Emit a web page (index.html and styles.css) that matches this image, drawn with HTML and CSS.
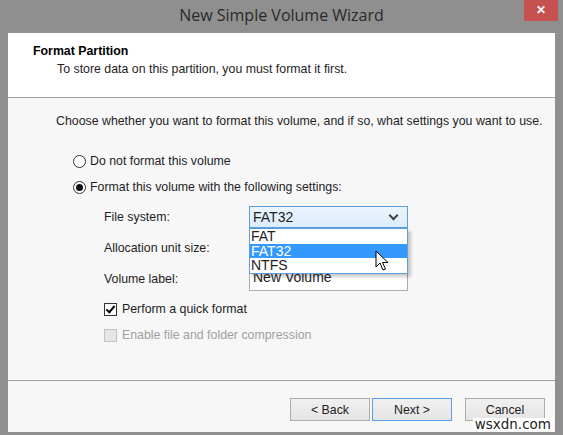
FILE: index.html
```html
<!DOCTYPE html>
<html>

<head>
  <meta charset="utf-8">
  <meta name="viewport" content="width=device-width">
  <title>New Simple Volume Wizard</title>
  <link rel="stylesheet" href="styles.css">
</head>

<body>
  <div class="window">
    <div class="titlebar">
      <span></span>
      <span class="title">New Simple Volume Wizard</span>
      <span class="close">&#x2715;</span>
    </div>
    <div class="content">
      <div class="header">
        <div class="header-title">Format Partition</div>
        <div class="header-sub">To store data on this partition, you must format it first.</div>
      </div>
      <div class="main">
        <p class="intro">Choose whether you want to format this volume, and if so, what settings you want to use.</p>
        <div class="radio-row"><span class="radio"></span>Do not format this volume</div>
        <div class="radio-row"><span class="radio checked"></span>Format this volume with the following settings:</div>
        <div class="settings">
          <label>File system:</label>
          <div class="combo-wrap">
            <div class="combo active">FAT32<span class="chevron"></span></div>
            <ul class="dropdown">
              <li>FAT</li>
              <li class="selected">FAT32</li>
              <li>NTFS</li>
            </ul>
            <svg class="cursor" width="14" height="22" viewBox="0 0 14 22">
              <path d="M1 1 L1 17 L5 13 L8 20 L10.5 19 L7.5 12.5 L13 12.5 Z" fill="#fff" stroke="#000" stroke-width="1" stroke-linejoin="round"/>
            </svg>
          </div>
          <label>Allocation unit size:</label>
          <div class="combo"></div>
          <label>Volume label:</label>
          <div class="textbox">New Volume</div>
        </div>
        <div class="check-row"><span class="checkbox checked"></span>Perform a quick format</div>
        <div class="check-row disabled"><span class="checkbox"></span>Enable file and folder compression</div>
      </div>
      <div class="footer">
        <button class="btn">&lt; Back</button>
        <button class="btn default">Next &gt;</button>
        <button class="btn cancel">Cancel</button>
      </div>
      <span class="watermark">wsxdn.com</span>
    </div>
  </div>
</body>

</html>
```

FILE: styles.css
```css
html,
body {
  margin: 0;
  height: 100%;
  font-family: "Liberation Sans", Arial, sans-serif;
  font-size: 12.35px;
  color: #1e1e1e;
}

.window {
  height: 435px;
  box-sizing: border-box;
  display: flex;
  flex-direction: column;
  background: #8f8f8f;
  padding: 0 8px 3px;
}

.titlebar {
  height: 33px;
  display: grid;
  grid-template-columns: 1fr auto 1fr;
  align-items: start;
}

.title {
  font-family: "Open Sans", sans-serif;
  font-size: 16px;
  color: #2a2a2a;
  line-height: 31px;
}

.close {
  justify-self: end;
  width: 34px;
  height: 21px;
  margin-right: -3px;
  background: #c75050;
  color: #fff;
  font-size: 12px;
  font-weight: bold;
  line-height: 21px;
  text-align: center;
}

.content {
  flex: 1;
  display: flex;
  flex-direction: column;
  background: #f7f7f7;
  position: relative;
}

.header {
  height: 65px;
  box-sizing: border-box;
  background: #fff;
  border-bottom: 1px solid #a0a0a0;
  padding: 11px 0 0 25px;
  line-height: 15px;
}

.header-title {
  font-weight: bold;
  color: #000;
}

.header-sub {
  margin: 3px 0 0 24px;
}

.main {
  flex: 1;
  padding: 16px 0 0 48px;
  line-height: 15px;
}

.intro {
  margin: 0 0 25px;
}

.radio-row,
.check-row {
  display: flex;
  align-items: center;
  height: 15px;
  margin-bottom: 11px;
}

.radio-row {
  padding-left: 17px;
}

.radio {
  width: 11px;
  height: 11px;
  border: 1px solid #333;
  border-radius: 50%;
  background: #fff;
  margin-right: 4px;
  display: flex;
  align-items: center;
  justify-content: center;
}

.radio.checked::after {
  content: "";
  width: 7px;
  height: 7px;
  border-radius: 50%;
  background: #111;
}

.settings {
  display: grid;
  grid-template-columns: 145px 159px;
  grid-auto-rows: 22px;
  row-gap: 9px;
  margin: 8px 0 0 48px;
  align-items: center;
}

.combo-wrap {
  position: relative;
  height: 22px;
}

.combo,
.textbox {
  height: 22px;
  box-sizing: border-box;
  border: 1px solid #acacac;
  background: #fff;
  font-size: 14px;
  padding-left: 3px;
  line-height: 20px;
}

.combo.active {
  display: flex;
  justify-content: space-between;
  border-color: #5a9ee0;
  background: linear-gradient(#ecf4fc, #dcecfc);
}

.chevron {
  width: 5px;
  height: 5px;
  border-right: 2px solid #444;
  border-bottom: 2px solid #444;
  transform: rotate(45deg);
  margin: 5px 10px 0 0;
}

.textbox {
  height: 23px;
  line-height: 17px;
}

.dropdown {
  position: absolute;
  top: 22px;
  left: 0;
  width: 159px;
  box-sizing: border-box;
  margin: 0;
  padding: 0;
  list-style: none;
  background: #fff;
  border: 1px solid #5a9ee0;
  box-shadow: 3px 3px 3px rgba(0, 0, 0, 0.2);
  font-size: 14px;
  line-height: 14.7px;
  z-index: 2;
}

.dropdown li {
  padding-left: 1px;
}

.dropdown li.selected {
  background: #3399ff;
  color: #fff;
}

.cursor {
  position: absolute;
  left: 126px;
  top: 44px;
  z-index: 3;
}

.check-row {
  margin-left: 48px;
}

.settings + .check-row {
  margin-top: 12px;
}

.checkbox {
  width: 11px;
  height: 11px;
  border: 1px solid #333;
  background: #fff;
  margin-right: 5px;
  position: relative;
}

.checkbox.checked::after {
  content: "";
  position: absolute;
  left: 3px;
  top: 0;
  width: 3px;
  height: 7px;
  border-right: 2px solid #000;
  border-bottom: 2px solid #000;
  transform: rotate(40deg);
}

.check-row.disabled {
  color: #a0a0a0;
}

.check-row.disabled .checkbox {
  border-color: #c4c4c4;
  background: #e6e6e6;
}

.footer {
  height: 52px;
  box-sizing: border-box;
  border-top: 1px solid #a0a0a0;
  display: flex;
  justify-content: flex-end;
  align-items: flex-start;
  padding: 17px 10px 0 0;
}

.btn {
  width: 80px;
  height: 23px;
  font-family: inherit;
  font-size: 12.35px;
  color: #1e1e1e;
  border: 1px solid #acacac;
  background: linear-gradient(#f0f0f0, #e5e5e5);
  margin-left: 2px;
}

.btn.default {
  border-color: #5a9ee0;
}

.btn.cancel {
  margin-left: 13px;
}

.watermark {
  position: absolute;
  right: 2px;
  bottom: 2px;
  background: #fff;
  padding: 0 2px;
  font-family: "DejaVu Sans", sans-serif;
  font-size: 13.5px;
  line-height: 12px;
  color: #222;
}
```
